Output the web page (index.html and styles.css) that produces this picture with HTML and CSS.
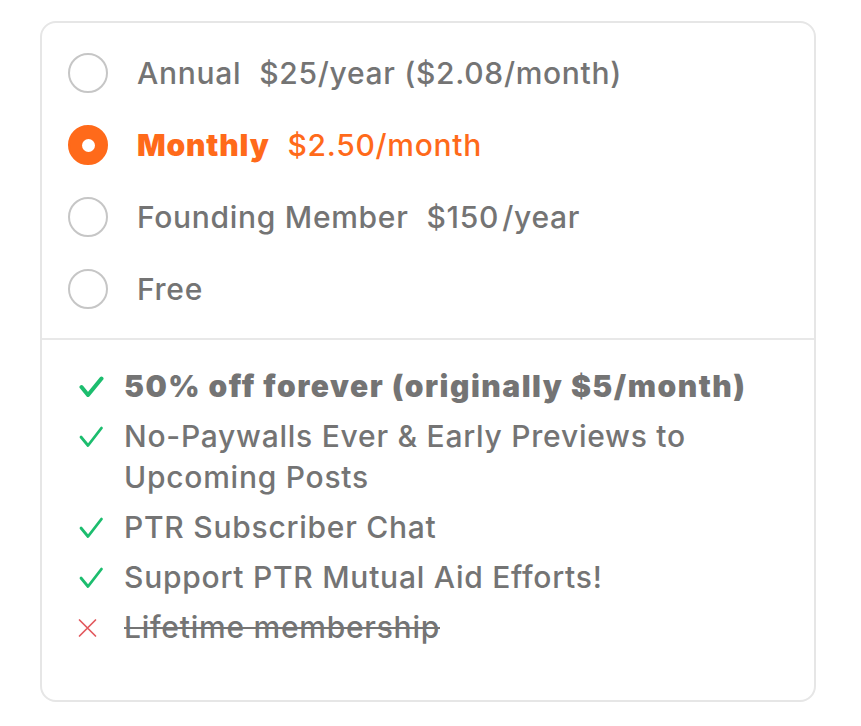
FILE: index.html
```html
<!DOCTYPE html>
<html>
<head>
<meta charset="utf-8">
<link rel="stylesheet" href="styles.css">
</head>
<body>
<div class="card">
  <div class="plans">
    <div class="plan">
      <span class="radio"></span>
      <span class="plan-text"><span class="name">Annual</span><span class="price">$25/year ($2.08/month)</span></span>
    </div>
    <div class="plan selected">
      <span class="radio"></span>
      <span class="plan-text"><span class="name">Monthly</span><span class="price">$2.50/month</span></span>
    </div>
    <div class="plan">
      <span class="radio"></span>
      <span class="plan-text"><span class="name">Founding Member</span><span class="price">$150&#8202;/year</span></span>
    </div>
    <div class="plan">
      <span class="radio"></span>
      <span class="plan-text"><span class="name">Free</span></span>
    </div>
  </div>
  <ul class="features">
    <li class="feature strong">
      <svg class="icon" viewBox="0 0 26 24"><path d="M3.5 12 L10 20 L23.5 3.5" fill="none" stroke="#1cbd6e" stroke-width="4" stroke-linecap="round" stroke-linejoin="round"/></svg>
      <span>50% off forever (originally $5/month)</span>
    </li>
    <li class="feature">
      <svg class="icon" viewBox="0 0 26 24"><path d="M3 12 L10 20.5 L23.5 3" fill="none" stroke="#1cbd6e" stroke-width="2.8" stroke-linecap="round" stroke-linejoin="round"/></svg>
      <span>No-Paywalls Ever &amp; Early Previews to Upcoming Posts</span>
    </li>
    <li class="feature">
      <svg class="icon" viewBox="0 0 26 24"><path d="M3 12 L10 20.5 L23.5 3" fill="none" stroke="#1cbd6e" stroke-width="2.8" stroke-linecap="round" stroke-linejoin="round"/></svg>
      <span>PTR Subscriber Chat</span>
    </li>
    <li class="feature">
      <svg class="icon" viewBox="0 0 26 24"><path d="M3 12 L10 20.5 L23.5 3" fill="none" stroke="#1cbd6e" stroke-width="2.8" stroke-linecap="round" stroke-linejoin="round"/></svg>
      <span>Support PTR Mutual Aid Efforts!</span>
    </li>
    <li class="feature missing">
      <svg class="icon" viewBox="0 0 26 24"><path d="M1.5 4 L17.5 20 M17.5 4 L1.5 20" fill="none" stroke="#e2585d" stroke-width="1.7" stroke-linecap="round"/></svg>
      <span>Lifetime membership</span>
    </li>
  </ul>
</div>
</body>
</html>
```
FILE: styles.css
```css
* { box-sizing: border-box; }
html, body { margin: 0; padding: 0; background: #ffffff; }
body {
  font-family: Inter, "Noto Sans", "Liberation Sans", sans-serif;
  color: #747474;
}
.card {
  margin: 21px 0 0 40px;
  width: 776px;
  height: 681px;
  border: 2px solid #e6e6e6;
  border-radius: 16px;
}
.plans {
  padding: 14px 0 13px 26px;
  border-bottom: 2px solid #e8e8e8;
}
.plan {
  height: 72px;
  display: flex;
  align-items: center;
  gap: 29px;
  font-size: 30px;
  letter-spacing: 0.7px;
}
.radio {
  width: 40px;
  height: 40px;
  border-radius: 50%;
  border: 2px solid #c6c6c6;
  flex: none;
  display: flex;
  align-items: center;
  justify-content: center;
}
.plan.selected .radio {
  background: #ff6a1a;
  border-color: #ff6a1a;
}
.plan.selected .radio::after {
  content: "";
  width: 13px;
  height: 13px;
  border-radius: 50%;
  background: #ffffff;
}
.plan-text { display: flex; gap: 18px; }
.name { font-weight: 500; }
.price { font-weight: 500; }
.plan.selected .plan-text { color: #ff6a1a; }
.plan.selected .name { font-weight: 900; letter-spacing: 0.8px; }
.features {
  list-style: none;
  margin: 0;
  padding: 26px 20px 0 36px;
  display: flex;
  flex-direction: column;
  gap: 9px;
}
.feature {
  display: flex;
  align-items: flex-start;
  gap: 20px;
  font-size: 30px;
  letter-spacing: 0.75px;
  line-height: 41px;
  font-weight: 500;
}
.feature .icon {
  width: 26px;
  height: 24px;
  flex: none;
  margin-top: 9px;
}
.feature.strong { font-weight: 900; letter-spacing: 1.5px; }
.feature.missing span { text-decoration: line-through; text-decoration-thickness: 2px; }
```
